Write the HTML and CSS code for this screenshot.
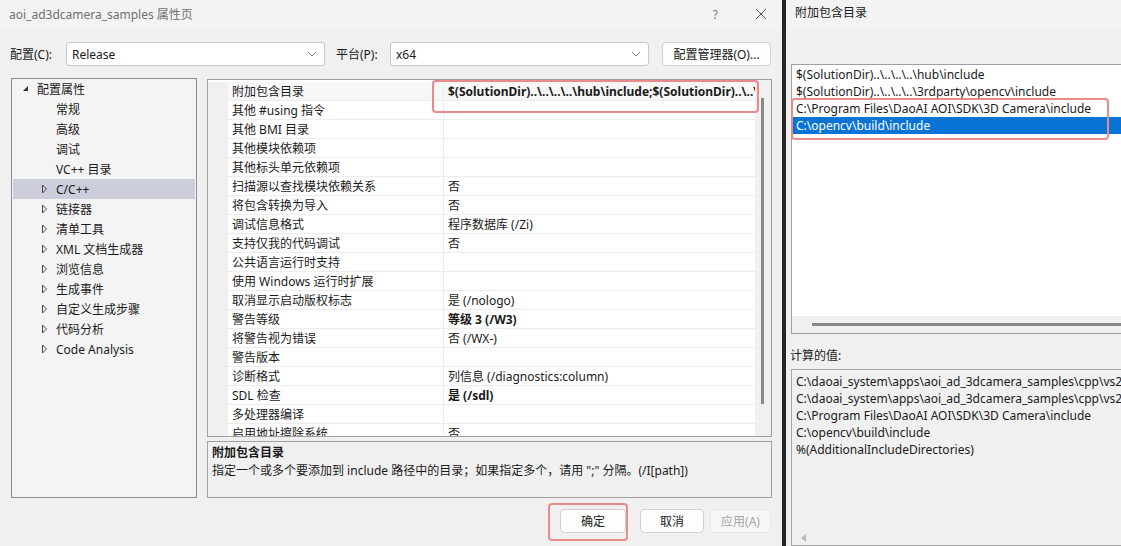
FILE: index.html
```html
<!DOCTYPE html>
<html lang="zh-CN">

<head>
    <meta charset="UTF-8">
    <title>aoi_ad3dcamera_samples 属性页</title>
    <link rel="stylesheet" href="styles.css">
</head>

<body>

    <div class="dialog">
        <div class="titlebar">
            <span class="title">aoi_ad3dcamera_samples 属性页</span>
            <span class="help">?</span>
            <svg class="close" width="12" height="12" viewBox="0 0 12 12">
                <path d="M1 1 L11 11 M11 1 L1 11" stroke="#555" stroke-width="1" fill="none" />
            </svg>
        </div>

        <div class="toolbar">
            <label class="tb-label">配置(C):</label>
            <div class="select">
                <span>Release</span>
                <svg width="10" height="6" viewBox="0 0 10 6"><path d="M1 1 L5 5 L9 1" stroke="#888" fill="none" /></svg>
            </div>
            <label class="tb-label platform">平台(P):</label>
            <div class="select">
                <span>x64</span>
                <svg width="10" height="6" viewBox="0 0 10 6"><path d="M1 1 L5 5 L9 1" stroke="#888" fill="none" /></svg>
            </div>
            <button class="btn cfg">配置管理器(O)...</button>
        </div>

        <div class="main">
            <div class="tree">
                <div class="node root">
                    <svg class="arrow" width="12" height="8" viewBox="0 0 12 8"><polygon points="8,1 8,6 3,6" fill="#333" /></svg>
                    <span>配置属性</span>
                </div>
                <div class="node leaf">常规</div>
                <div class="node leaf">高级</div>
                <div class="node leaf">调试</div>
                <div class="node leaf">VC++ 目录</div>
                <div class="node child selected">
                    <svg class="arrow" width="12" height="10" viewBox="0 0 12 10"><polygon points="3.5,1 7.5,5 3.5,9" fill="none" stroke="#444" /></svg>
                    <span>C/C++</span>
                </div>
                <div class="node child"><svg class="arrow" width="12" height="10" viewBox="0 0 12 10"><polygon points="3.5,1 7.5,5 3.5,9" fill="none" stroke="#444" /></svg><span>链接器</span></div>
                <div class="node child"><svg class="arrow" width="12" height="10" viewBox="0 0 12 10"><polygon points="3.5,1 7.5,5 3.5,9" fill="none" stroke="#444" /></svg><span>清单工具</span></div>
                <div class="node child"><svg class="arrow" width="12" height="10" viewBox="0 0 12 10"><polygon points="3.5,1 7.5,5 3.5,9" fill="none" stroke="#444" /></svg><span>XML 文档生成器</span></div>
                <div class="node child"><svg class="arrow" width="12" height="10" viewBox="0 0 12 10"><polygon points="3.5,1 7.5,5 3.5,9" fill="none" stroke="#444" /></svg><span>浏览信息</span></div>
                <div class="node child"><svg class="arrow" width="12" height="10" viewBox="0 0 12 10"><polygon points="3.5,1 7.5,5 3.5,9" fill="none" stroke="#444" /></svg><span>生成事件</span></div>
                <div class="node child"><svg class="arrow" width="12" height="10" viewBox="0 0 12 10"><polygon points="3.5,1 7.5,5 3.5,9" fill="none" stroke="#444" /></svg><span>自定义生成步骤</span></div>
                <div class="node child"><svg class="arrow" width="12" height="10" viewBox="0 0 12 10"><polygon points="3.5,1 7.5,5 3.5,9" fill="none" stroke="#444" /></svg><span>代码分析</span></div>
                <div class="node child"><svg class="arrow" width="12" height="10" viewBox="0 0 12 10"><polygon points="3.5,1 7.5,5 3.5,9" fill="none" stroke="#444" /></svg><span>Code Analysis</span></div>
            </div>

            <div class="props">
                <div class="grid">
                    <div class="grid-body">
                        <div class="row current"><i></i><span class="name">附加包含目录</span><span class="val bold">$(SolutionDir)..\..\..\..\hub\include;$(SolutionDir)..\..\..\..\3rdparty\opencv\include;C:\Program Files</span></div>
                        <div class="row"><i></i><span class="name">其他 #using 指令</span><span class="val"></span></div>
                        <div class="row"><i></i><span class="name">其他 BMI 目录</span><span class="val"></span></div>
                        <div class="row"><i></i><span class="name">其他模块依赖项</span><span class="val"></span></div>
                        <div class="row"><i></i><span class="name">其他标头单元依赖项</span><span class="val"></span></div>
                        <div class="row"><i></i><span class="name">扫描源以查找模块依赖关系</span><span class="val">否</span></div>
                        <div class="row"><i></i><span class="name">将包含转换为导入</span><span class="val">否</span></div>
                        <div class="row"><i></i><span class="name">调试信息格式</span><span class="val">程序数据库 (/Zi)</span></div>
                        <div class="row"><i></i><span class="name">支持仅我的代码调试</span><span class="val">否</span></div>
                        <div class="row"><i></i><span class="name">公共语言运行时支持</span><span class="val"></span></div>
                        <div class="row"><i></i><span class="name">使用 Windows 运行时扩展</span><span class="val"></span></div>
                        <div class="row"><i></i><span class="name">取消显示启动版权标志</span><span class="val">是 (/nologo)</span></div>
                        <div class="row"><i></i><span class="name">警告等级</span><span class="val bold">等级 3 (/W3)</span></div>
                        <div class="row"><i></i><span class="name">将警告视为错误</span><span class="val">否 (/WX-)</span></div>
                        <div class="row"><i></i><span class="name">警告版本</span><span class="val"></span></div>
                        <div class="row"><i></i><span class="name">诊断格式</span><span class="val">列信息 (/diagnostics:column)</span></div>
                        <div class="row"><i></i><span class="name">SDL 检查</span><span class="val bold">是 (/sdl)</span></div>
                        <div class="row"><i></i><span class="name">多处理器编译</span><span class="val"></span></div>
                        <div class="row"><i></i><span class="name">启用地址擦除系统</span><span class="val">否</span></div>
                    </div>
                    <div class="vscroll"><div class="thumb"></div></div>
                    <div class="mark mark-value"></div>
                </div>
                <div class="desc">
                    <div class="desc-title">附加包含目录</div>
                    <div>指定一个或多个要添加到 include 路径中的目录；如果指定多个，请用 ";" 分隔。(/I[path])</div>
                </div>
            </div>
        </div>

        <div class="footer">
            <div class="ok-wrap">
                <button class="btn ok">确定</button>
                <div class="mark mark-ok"></div>
            </div>
            <button class="btn cancel">取消</button>
            <button class="btn apply" disabled>应用(A)</button>
        </div>
    </div>

    <div class="edge"></div>

    <div class="side">
        <div class="side-title">附加包含目录</div>
        <div class="side-band"></div>
        <div class="list">
            <div class="list-items">
                <div class="item">$(SolutionDir)..\..\..\..\hub\include</div>
                <div class="item">$(SolutionDir)..\..\..\..\3rdparty\opencv\include</div>
                <div class="item">C:\Program Files\DaoAI AOI\SDK\3D Camera\include</div>
                <div class="item picked">C:\opencv\build\include</div>
            </div>
            <div class="hscroll"><div class="hthumb"></div></div>
            <div class="mark mark-list"></div>
        </div>
        <div class="computed-label">计算的值:</div>
        <div class="computed">
            <div class="item">C:\daoai_system\apps\aoi_ad_3dcamera_samples\cpp\vs2019\..\..\..\..\hub\include</div>
            <div class="item">C:\daoai_system\apps\aoi_ad_3dcamera_samples\cpp\vs2019\..\..\..\..\3rdparty\opencv\include</div>
            <div class="item">C:\Program Files\DaoAI AOI\SDK\3D Camera\include</div>
            <div class="item">C:\opencv\build\include</div>
            <div class="item">%(AdditionalIncludeDirectories)</div>
            <svg class="left-arrow" width="8" height="10" viewBox="0 0 8 10"><polygon points="6,1 6,9 1,5" fill="#bbb" /></svg>
        </div>
    </div>

</body>

</html>
```

FILE: styles.css
```css
* {
    box-sizing: border-box;
}

body {
    margin: 0;
    width: 1121px;
    height: 546px;
    overflow: hidden;
    display: flex;
    font-family: "Noto Sans", "Noto Sans CJK SC", sans-serif;
    font-size: 12px;
    color: #1a1a1a;
    background: #f0f0f0;
}

/* left dialog */
.dialog {
    flex: none;
    width: 782px;
    display: flex;
    flex-direction: column;
    background: #f0f0f0;
}

.titlebar {
    height: 30px;
    display: flex;
    align-items: center;
    padding: 0 10px 2px 9px;
    background: #f3f3f3;
}

.title {
    color: #707070;
    flex: 1;
}

.help {
    color: #777;
    margin-right: 37px;
    font-size: 12px;
}

.close {
    margin-right: 5px;
}

.toolbar {
    display: flex;
    align-items: center;
    height: 26px;
    margin-top: 11px;
    padding-left: 10px;
}

.tb-label {
    width: 56px;
    flex: none;
}

.tb-label.platform {
    width: 54px;
    margin-left: 11px;
}

.select {
    flex: none;
    width: 259px;
    height: 24px;
    background: #fff;
    border: 1px solid #c8c8c8;
    border-radius: 3px;
    display: flex;
    align-items: center;
    justify-content: space-between;
    padding: 0 7px 0 5px;
}

.btn {
    flex: none;
    font-family: inherit;
    font-size: 12px;
    height: 24px;
    background: #fdfdfd;
    border: 1px solid #d0d0d0;
    border-radius: 4px;
    color: #1a1a1a;
    padding: 0;
}

.btn.cfg {
    width: 109px;
    margin-left: 13px;
}

.main {
    display: flex;
    margin-top: 11px;
    height: 420px;
}

/* tree */
.tree {
    flex: none;
    width: 186px;
    margin-left: 11px;
    border: 1px solid #8c8c92;
    background: #f4f4f4;
    padding: 0 1px;
}

.node {
    height: 20px;
    display: flex;
    align-items: center;
}

.node .arrow {
    margin-right: 5px;
}

.node.root {
    padding-left: 7px;
}

.node.child {
    padding-left: 26px;
}

.node.leaf {
    padding-left: 43px;
}

.node.selected {
    background: #cccedb;
}

/* property grid */
.props {
    flex: none;
    width: 565px;
    margin-left: 10px;
    display: flex;
    flex-direction: column;
}

.grid {
    position: relative;
    height: 358px;
    margin-top: 1px;
    border: 1px solid #a0a0a0;
    background: #fff;
    display: flex;
    overflow: hidden;
}

.grid-body {
    flex: 1;
    min-width: 0;
    padding-top: 2px;
    overflow: hidden;
}

.row {
    display: grid;
    grid-template-columns: 20px 215px 1fr;
    height: 19px;
    line-height: 20px;
}

.row i {
    background: #f0f0f0;
}

.row .name,
.row .val {
    padding-left: 4px;
    border-bottom: 1px solid #ededed;
    white-space: nowrap;
    overflow: hidden;
}

.row .val {
    border-left: 1px solid #ededed;
}

.row.current .name,
.row.current .val {
    background: #f7f7f7;
}

.bold {
    font-weight: bold;
}

.vscroll {
    flex: none;
    width: 16px;
    background: #f0f0f0;
}

.thumb {
    margin: 18px 0 0 6px;
    width: 3px;
    height: 306px;
    background: #888;
}

.mark {
    position: absolute;
    border: 2px solid #e98b8b;
    border-radius: 4px;
    pointer-events: none;
}

.mark-value {
    left: 224px;
    top: 0;
    width: 327px;
    height: 33px;
}

.desc {
    margin-top: 4px;
    height: 57px;
    border: 1px solid #a0a0a0;
    padding: 2px 4px;
    line-height: 18px;
}

.desc-title {
    font-weight: bold;
}

/* footer buttons */
.footer {
    display: flex;
    justify-content: flex-end;
    margin-top: 11px;
    padding-right: 11px;
}

.ok-wrap {
    position: relative;
}

.btn.ok {
    width: 66px;
}

.mark-ok {
    left: -12px;
    top: -6px;
    width: 80px;
    height: 38px;
}

.btn.cancel {
    width: 64px;
    margin-left: 14px;
}

.btn.apply {
    width: 61px;
    margin-left: 6px;
    color: #a5a5a5;
    background: #f6f6f6;
    border-color: #e6e6e6;
}

/* window edge between the two dialogs */
.edge {
    flex: none;
    width: 4px;
    background: #262626;
}

/* right dialog */
.side {
    flex: 1;
    min-width: 0;
    overflow: hidden;
    background: #f0f0f0;
    padding-left: 4px;
    display: flex;
    flex-direction: column;
}

.side-title {
    height: 28px;
    line-height: 26px;
    background: #f3f3f3;
    margin-left: -4px;
    padding-left: 9px;
}

.side-band {
    height: 36px;
    margin-left: -4px;
    background: #eff1f3;
}

.list {
    position: relative;
    height: 270px;
    margin-left: 1px;
    margin-right: -10px;
    border: 1px solid #a0a0a0;
    background: #fff;
    display: flex;
    flex-direction: column;
}

.list-items {
    flex: 1;
    padding-top: 1px;
}

.item {
    height: 17px;
    line-height: 17px;
    padding-left: 4px;
    white-space: nowrap;
}

.item.picked {
    background: #0a74d6;
    color: #fff;
    margin-left: 1px;
    padding-left: 3px;
}

.hscroll {
    height: 17px;
    background: #f0f0f0;
}

.hthumb {
    margin: 7px 0 0 20px;
    height: 3px;
    background: #888;
}

.mark-list {
    left: -1px;
    top: 33px;
    width: 318px;
    height: 42px;
}

.computed-label {
    margin-top: 13px;
    height: 22px;
    line-height: 18px;
}

.computed {
    position: relative;
    flex: 1;
    margin-left: 1px;
    margin-right: -10px;
    border: 1px solid #a8a8a8;
    padding-top: 3px;
    overflow: hidden;
}

.left-arrow {
    position: absolute;
    left: 8px;
    bottom: 2px;
}
```
